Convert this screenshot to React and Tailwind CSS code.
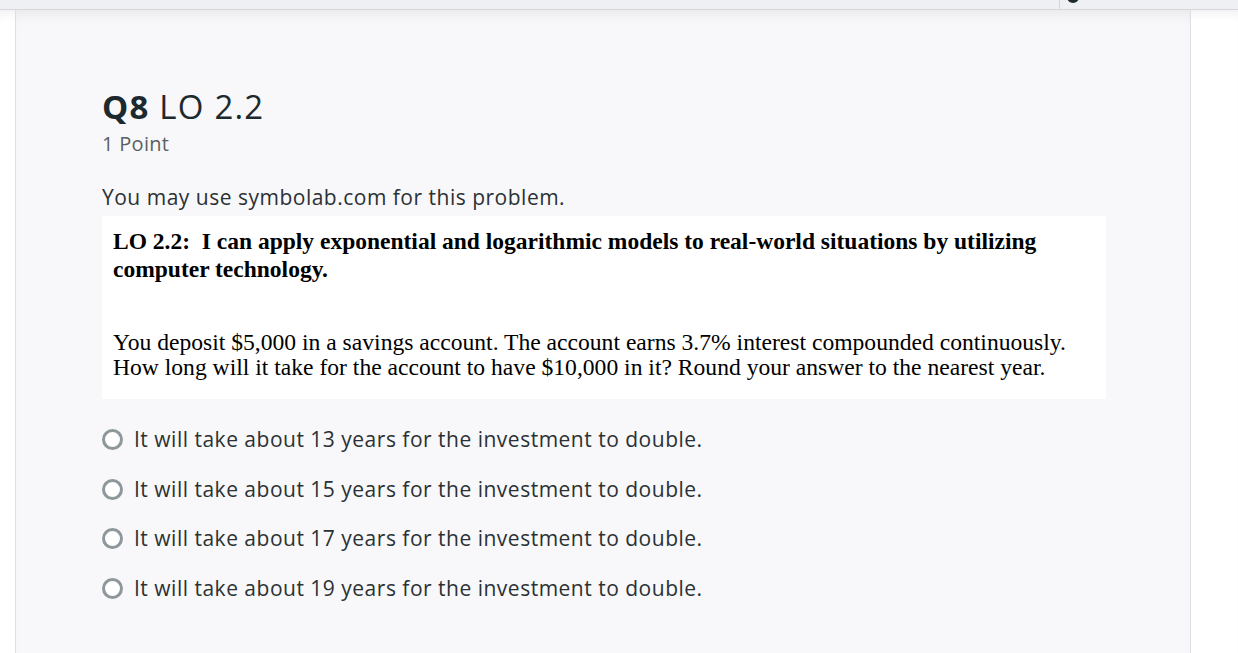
import React from "react";

const options = [
  "It will take about 13 years for the investment to double.",
  "It will take about 15 years for the investment to double.",
  "It will take about 17 years for the investment to double.",
  "It will take about 19 years for the investment to double.",
];

export default function App() {
  const sans = { fontFamily: '"Open Sans", "Liberation Sans", sans-serif' };
  const serif = { fontFamily: '"Liberation Serif", "Times New Roman", serif' };
  return (
    <div className="w-[1238px] h-[653px] overflow-hidden bg-white flex flex-col" style={sans}>
      <div className="h-[10px] shrink-0 bg-[#eff0f4] border-b border-[#d5d7db] flex">
        <div className="w-[1060px] border-r border-[#d5d7db]" />
        <div className="relative flex-1">
          <div className="absolute left-[7px] top-[-9px] w-[12px] h-[12px] rounded-full bg-[#1e2a30]" />
        </div>
      </div>
      <div className="flex flex-1 shadow-[inset_0_10px_12px_-8px_rgba(0,0,0,0.08)]">
        <div className="w-[15px] shrink-0" />
        <div className="w-[1176px] shrink-0 bg-[#f8f8fa] shadow-[inset_0_12px_14px_-8px_rgba(0,0,0,0.07)] border-l border-r border-[#dedfe3] pl-[86px] pt-[77px]">
          <div className="text-[33px] leading-[40px] tracking-[1.2px] text-[#1c2a2e]">
            <span className="font-bold">Q8</span> LO 2.2
          </div>
          <div className="text-[20px] leading-[26px] tracking-[0.3px] text-[#5a5f64] mt-[4px]">1 Point</div>
          <div className="mt-[27px] text-[21px] leading-[26px] tracking-[0.5px] text-[#2b3134]">
            You may use symbolab.com for this problem.
          </div>
          <div className="mt-[6px] w-[1004px] h-[183px] bg-white pl-[11px] pt-[11px] text-black" style={serif}>
            <div className="text-[23.5px] leading-[28px] font-bold">
              LO 2.2:&nbsp; I can apply exponential and logarithmic models to real-world situations by utilizing computer technology.
            </div>
            <div className="mt-[47px] text-[23.6px] leading-[25px] pr-[10px]">
              You deposit $5,000 in a savings account. The account earns 3.7% interest compounded continuously. How long will it take for the account to have $10,000 in it? Round your answer to the nearest year.
            </div>
          </div>
          <div className="mt-[16px] flex flex-col">
            {options.map((o) => (
              <div key={o} className="h-[49.5px] flex items-center gap-[11px] text-[21px] tracking-[0.5px] text-[#2b3134]">
                <div className="w-[21px] h-[21px] rounded-full border-[3px] border-[#8e979b] bg-white shrink-0" />
                <span>{o}</span>
              </div>
            ))}
          </div>
        </div>
        <div className="flex-1" />
      </div>
    </div>
  );
}
